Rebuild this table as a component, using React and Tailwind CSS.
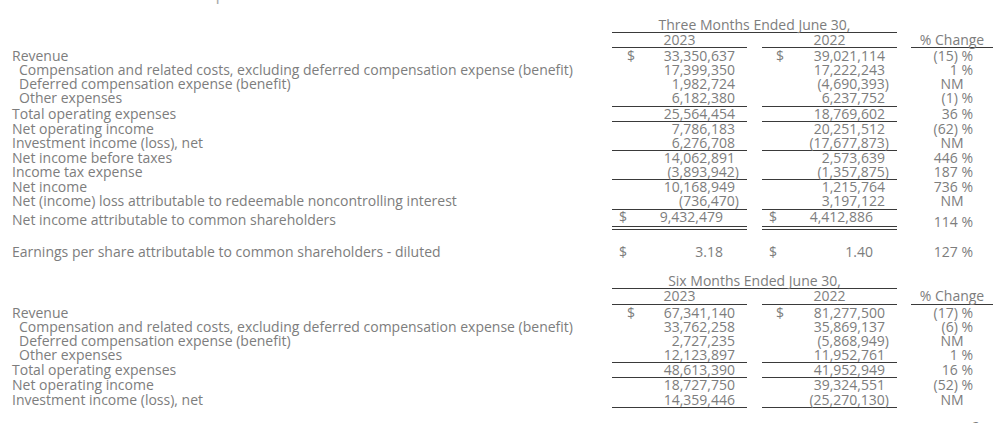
import clsx from "clsx";

const threeMonths = [
  { label: "Revenue", a: "33,350,637", b: "39,021,114", p: "(15) %", dollar: true },
  { label: "Compensation and related costs, excluding deferred compensation expense (benefit)", indent: true, a: "17,399,350", b: "17,222,243", p: "1 %" },
  { label: "Deferred compensation expense (benefit)", indent: true, a: "1,982,724", b: "(4,690,393)", p: "NM" },
  { label: "Other expenses", indent: true, a: "6,182,380", b: "6,237,752", p: "(1) %", line: true },
  { label: "Total operating expenses", a: "25,564,454", b: "18,769,602", p: "36 %", line: true },
  { label: "Net operating income", a: "7,786,183", b: "20,251,512", p: "(62) %" },
  { label: "Investment income (loss), net", a: "6,276,708", b: "(17,677,873)", p: "NM", line: true },
  { label: "Net income before taxes", a: "14,062,891", b: "2,573,639", p: "446 %" },
  { label: "Income tax expense", a: "(3,893,942)", b: "(1,357,875)", p: "187 %", line: true },
  { label: "Net income", a: "10,168,949", b: "1,215,764", p: "736 %" },
  { label: "Net (income) loss attributable to redeemable noncontrolling interest", a: "(736,470)", b: "3,197,122", p: "NM", line: true },
];

const sixMonths = [
  { label: "Revenue", a: "67,341,140", b: "81,277,500", p: "(17) %", dollar: true },
  { label: "Compensation and related costs, excluding deferred compensation expense (benefit)", indent: true, a: "33,762,258", b: "35,869,137", p: "(6) %" },
  { label: "Deferred compensation expense (benefit)", indent: true, a: "2,727,235", b: "(5,868,949)", p: "NM" },
  { label: "Other expenses", indent: true, a: "12,123,897", b: "11,952,761", p: "1 %", line: true },
  { label: "Total operating expenses", a: "48,613,390", b: "41,952,949", p: "16 %", line: true },
  { label: "Net operating income", a: "18,727,750", b: "39,324,551", p: "(52) %" },
  { label: "Investment income (loss), net", a: "14,359,446", b: "(25,270,130)", p: "NM", line: true },
];

function Amount({ value, dollar, line, dollarPad }) {
  const neg = value.startsWith("(");
  return (
    <div className={clsx("w-[135px] flex", line && "border-b border-[#3a3a3a]")}>
      <span className={dollarPad}>{dollar ? "$" : ""}</span>
      <span className={clsx("ml-auto", neg ? "pr-[8px]" : "pr-[12px]")}>{value}</span>
    </div>
  );
}

function Pct({ value }) {
  if (value === "NM") return <div className="w-[82px] text-center">NM</div>;
  return <div className="w-[82px] text-right pr-[20px]">{value}</div>;
}

function Row({ row }) {
  return (
    <div className="flex">
      <div className={clsx("w-[612px]", row.indent ? "pl-[19px]" : "pl-[12px]")}>{row.label}</div>
      <Amount value={row.a} dollar={row.dollar} line={row.line} dollarPad="pl-[15px]" />
      <div className="w-[15px]" />
      <Amount value={row.b} dollar={row.dollar} line={row.line} dollarPad="pl-[14px]" />
      <div className="w-[14px]" />
      <Pct value={row.p} />
    </div>
  );
}

function Header({ title }) {
  return (
    <>
      <div className="flex">
        <div className="w-[612px]" />
        <div className="w-[285px] text-center border-b border-[#3a3a3a]">{title}</div>
      </div>
      <div className="flex">
        <div className="w-[612px]" />
        <div className="w-[135px] text-center border-b border-[#3a3a3a]">2023</div>
        <div className="w-[15px]" />
        <div className="w-[135px] text-center border-b border-[#3a3a3a]">2022</div>
        <div className="w-[14px]" />
        <div className="w-[82px] text-center border-b border-[#3a3a3a]">% Change</div>
      </div>
    </>
  );
}

export default function App() {
  return (
    <div className="w-[1000px] h-[423px] overflow-hidden bg-white text-[#7d7d7d] text-[14px] leading-[14.15px] font-['Open_Sans',sans-serif]">
      <div className="-mt-[15px] h-[18px] pl-[12px] text-[17px] leading-[18px] text-[#aaa]">
        Consolidated Results of Operations
      </div>

      <div className="mt-[14.6px]">
        <Header title="Three Months Ended June 30," />
        <div className="pt-[1px]">
          {threeMonths.map((r, i) => (
            <Row key={i} row={r} />
          ))}
        </div>

        {/* total row with double underline */}
        <div className="flex h-[20px]">
          <div className="w-[612px] pl-[12px] self-center">Net income attributable to common shareholders</div>
          <div className="w-[135px] flex border-b-4 border-double border-[#3a3a3a]">
            <span className="pl-[7px]">$</span>
            <span className="ml-auto pr-[24px]">9,432,479</span>
          </div>
          <div className="w-[15px]" />
          <div className="w-[135px] flex border-b-4 border-double border-[#3a3a3a]">
            <span className="pl-[7px]">$</span>
            <span className="ml-auto pr-[24px]">4,412,886</span>
          </div>
          <div className="w-[14px]" />
          <div className="w-[82px] text-right pr-[20px] self-end">114 %</div>
        </div>

        <div className="flex mt-[15.5px]">
          <div className="w-[612px] pl-[12px]">Earnings per share attributable to common shareholders - diluted</div>
          <div className="w-[135px] flex">
            <span className="pl-[7px]">$</span>
            <span className="ml-auto pr-[24px]">3.18</span>
          </div>
          <div className="w-[15px]" />
          <div className="w-[135px] flex">
            <span className="pl-[7px]">$</span>
            <span className="ml-auto pr-[24px]">1.40</span>
          </div>
          <div className="w-[14px]" />
          <div className="w-[82px] text-right pr-[20px]">127 %</div>
        </div>
      </div>

      <div className="mt-[15px]">
        <Header title="Six Months Ended June 30," />
        <div className="pt-[1px]">
          {sixMonths.map((r, i) => (
            <Row key={i} row={r} />
          ))}
        </div>
      </div>

      <div className="flex justify-end pr-[20px] mt-[12px]">2</div>
    </div>
  );
}
